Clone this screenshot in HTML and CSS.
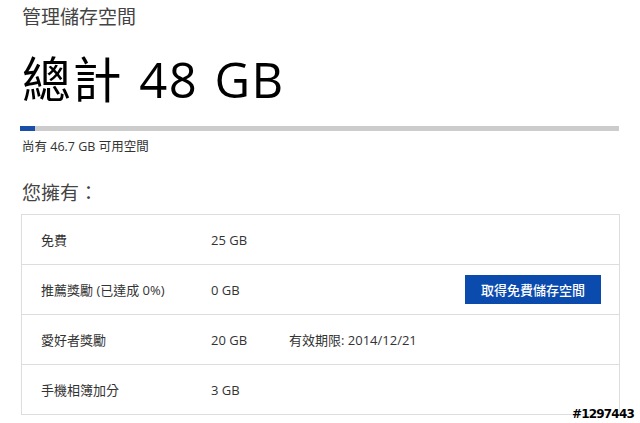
FILE: index.html
```html
<!DOCTYPE html>
<html lang="zh-Hant">
<head>
<meta charset="utf-8">
<title>管理儲存空間</title>
<link rel="stylesheet" href="styles.css">
</head>
<body>
<main class="page">
  <h2 class="title">管理儲存空間</h2>
  <h1 class="total">總計 48 GB</h1>
  <div class="bar"><div class="bar-fill" style="width: 2.5%"></div></div>
  <p class="free">尚有 46.7 GB 可用空間</p>
  <h3 class="owned">您擁有：</h3>
  <div class="table">
    <div class="row">
      <span class="label">免費</span>
      <span class="value">25 GB</span>
    </div>
    <div class="row">
      <span class="label">推薦獎勵 (已達成 0%)</span>
      <span class="value">0 GB</span>
      <span class="extra"></span>
      <button class="btn">取得免費儲存空間</button>
    </div>
    <div class="row">
      <span class="label">愛好者獎勵</span>
      <span class="value">20 GB</span>
      <span class="extra">有效期限: 2014/12/21</span>
    </div>
    <div class="row">
      <span class="label">手機相簿加分</span>
      <span class="value">3 GB</span>
    </div>
  </div>
</main>
<div class="watermark">#1297443</div>
</body>
</html>
```

FILE: styles.css
```css
html, body {
  margin: 0;
  padding: 0;
  background: #ffffff;
}

body {
  font-family: "Open Sans", "Noto Sans CJK TC", sans-serif;
  color: #222;
  width: 640px;
  height: 423px;
  overflow: hidden;
  position: relative;
}

.page {
  padding: 0 20px 0 20px;
  width: 600px;
}

.title {
  margin: 0;
  padding-top: 3px;
  font-family: "Noto Sans CJK TC", sans-serif;
  font-size: 19px;
  line-height: 26px;
  font-weight: 400;
  color: #444;
  padding-left: 2px;
}

.total {
  margin: 0;
  margin-top: 20px;
  font-size: 49px;
  line-height: 60px;
  font-weight: 400;
  color: #000;
  padding-left: 2px;
  letter-spacing: 1.5px;
  word-spacing: 2px;
}

.bar {
  margin-top: 17px;
  height: 5px;
  background: #cccccc;
  width: 599px;
}

.bar-fill {
  height: 100%;
  background: #1a4fa8;
}

.free {
  margin: 0;
  margin-top: 8px;
  font-size: 12.5px;
  line-height: 16px;
  color: #333;
  padding-left: 2px;
}

.owned {
  margin: 0;
  margin-top: 24px;
  font-family: "Noto Sans CJK TC", sans-serif;
  font-size: 19px;
  line-height: 26px;
  font-weight: 400;
  color: #444;
  padding-left: 2px;
}

.table {
  margin-top: 9px;
  border: 1px solid #dddddd;
  width: 597px;
  margin-left: 1px;
}

.row {
  display: grid;
  grid-template-columns: 170px 78px 1fr auto;
  align-items: center;
  height: 49px;
  padding: 0 18px 0 19px;
  font-size: 13px;
  color: #333;
}

.row + .row {
  border-top: 1px solid #dddddd;
}

.btn {
  font-family: "Noto Sans CJK TC", sans-serif;
  font-size: 13px;
  line-height: 29px;
  height: 29px;
  padding: 0 16px;
  border: 0;
  background: #0b4bae;
  color: #fff;
  font-weight: 500;
}

.watermark {
  position: absolute;
  right: 6px;
  bottom: 2px;
  font-family: "DejaVu Sans", sans-serif;
  font-weight: bold;
  font-size: 12px;
  letter-spacing: -0.8px;
  color: #000;
  text-shadow: 1px 0 #fff, -1px 0 #fff, 0 1px #fff, 0 -1px #fff;
}
```
